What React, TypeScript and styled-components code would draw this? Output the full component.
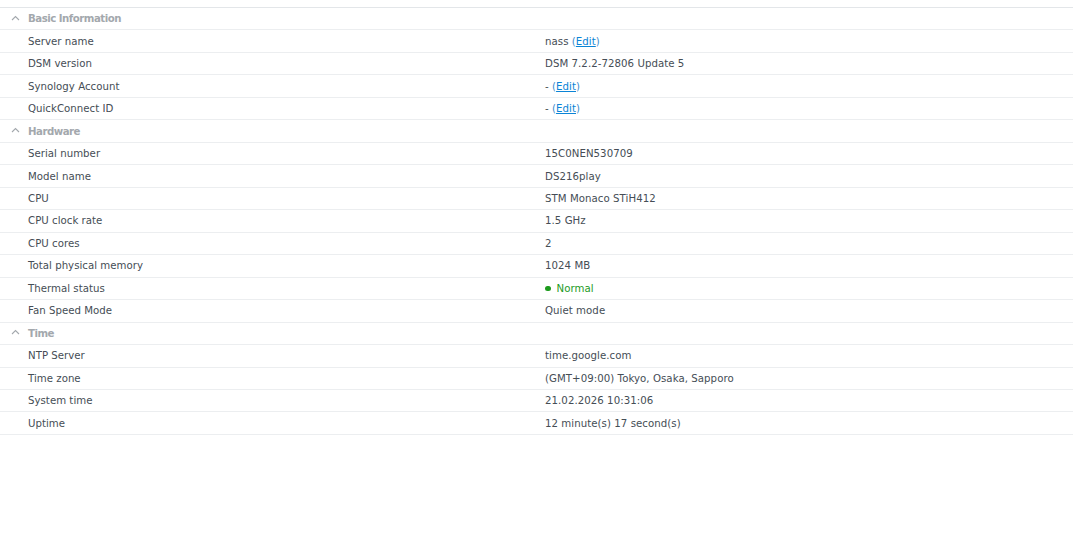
import React from 'react'
import styled, { createGlobalStyle } from 'styled-components'

const GlobalStyle = createGlobalStyle`
  html, body {
    margin: 0;
    padding: 0;
    background: #ffffff;
  }
  body {
    font-family: "DejaVu Sans", Verdana, sans-serif;
    font-size: 10.2px;
    color: #454d55;
  }
`

const Page = styled.div`
  width: 1073px;
  padding-top: 7px;
`

const Table = styled.div`
  border-top: 1px solid #e3e6e9;
`

const Row = styled.div`
  display: grid;
  grid-template-columns: 545px 1fr;
  align-items: center;
  height: 22.47px;
  box-sizing: border-box;
  border-bottom: 1px solid #eceef0;
`

const Label = styled.div`
  padding-left: 28px;
  white-space: nowrap;
  letter-spacing: 0.02px;
`

const Value = styled.div<{ $tone?: 'ok' }>`
  display: flex;
  align-items: center;
  gap: 6px;
  white-space: nowrap;
  letter-spacing: 0.05px;
  color: ${(p) => (p.$tone === 'ok' ? '#1e9b1e' : '#454d55')};
`

const GroupRow = styled.div`
  display: flex;
  align-items: center;
  height: 22.47px;
  box-sizing: border-box;
  padding-left: 11px;
  border-bottom: 1px solid #eceef0;
  color: #a3a8ad;
  font-weight: bold;
  letter-spacing: -0.5px;
`

const Chevron = styled.svg`
  width: 9px;
  height: 6px;
  margin-right: 8px;
  margin-top: -2px;
`

const LinkWrap = styled.span`
  color: #3a8ccc;
`

const Link = styled.a`
  color: #0a84d6;
  text-decoration: underline;
  cursor: pointer;
`

const Dot = styled.span`
  width: 5.5px;
  height: 5.5px;
  border-radius: 50%;
  background: #1e9b1e;
`

type Item = { label: string; value: React.ReactNode }
type Group = { title: string; items: Item[] }

const edit = (prefix: string) => (
  <>
    {prefix} <LinkWrap>(<Link>Edit</Link>)</LinkWrap>
  </>
)

const groups: Group[] = [
  {
    title: 'Basic Information',
    items: [
      { label: 'Server name', value: edit('nass') },
      { label: 'DSM version', value: 'DSM 7.2.2-72806 Update 5' },
      { label: 'Synology Account', value: edit('-') },
      { label: 'QuickConnect ID', value: edit('-') },
    ],
  },
  {
    title: 'Hardware',
    items: [
      { label: 'Serial number', value: '15C0NEN530709' },
      { label: 'Model name', value: 'DS216play' },
      { label: 'CPU', value: 'STM Monaco STiH412' },
      { label: 'CPU clock rate', value: '1.5 GHz' },
      { label: 'CPU cores', value: '2' },
      { label: 'Total physical memory', value: '1024 MB' },
      { label: 'Thermal status', value: 'ok' },
      { label: 'Fan Speed Mode', value: 'Quiet mode' },
    ],
  },
  {
    title: 'Time',
    items: [
      { label: 'NTP Server', value: 'time.google.com' },
      { label: 'Time zone', value: '(GMT+09:00) Tokyo, Osaka, Sapporo' },
      { label: 'System time', value: '21.02.2026 10:31:06' },
      { label: 'Uptime', value: '12 minute(s) 17 second(s)' },
    ],
  },
]

export default function App() {
  return (
    <>
      <GlobalStyle />
      <Page>
        <Table>
          {groups.map((g) => (
            <React.Fragment key={g.title}>
              <GroupRow>
                <Chevron viewBox="0 0 9 6">
                  <polyline points="1,5 4.5,1.5 8,5" fill="none" stroke="#a3a8ad" strokeWidth="1.1" />
                </Chevron>
                {g.title}
              </GroupRow>
              {g.items.map((it) => (
                <Row key={it.label}>
                  <Label>{it.label}</Label>
                  {it.value === 'ok' ? (
                    <Value $tone="ok">
                      <Dot />
                      Normal
                    </Value>
                  ) : (
                    <Value>
                      <span>{it.value}</span>
                    </Value>
                  )}
                </Row>
              ))}
            </React.Fragment>
          ))}
        </Table>
      </Page>
    </>
  )
}
